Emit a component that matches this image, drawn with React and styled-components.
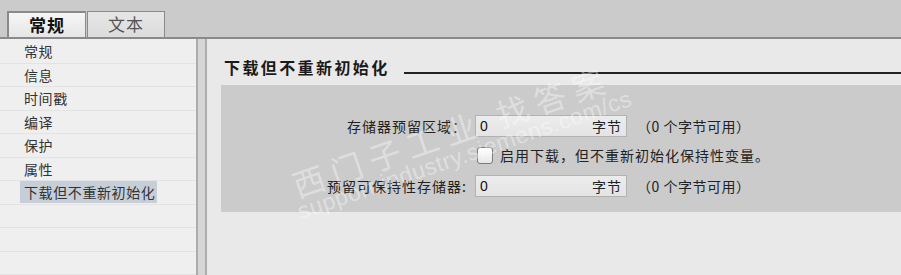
import React from "react";
import styled, { createGlobalStyle } from "styled-components";

const Global = createGlobalStyle`
  html, body { margin: 0; padding: 0; }
  body {
    width: 901px; height: 275px; overflow: hidden;
    background: #cbcbcb;
    font-family: "Noto Sans CJK SC", "Liberation Sans", sans-serif;
    color: #222;
  }
`;

const Page = styled.div`
  position: relative;
  width: 901px;
  height: 275px;
  display: flex;
  flex-direction: column;
  overflow: hidden;
`;

const TabStrip = styled.div`
  box-sizing: border-box;
  padding: 11px 0 0 7px;
  display: flex;
  align-items: stretch;
  gap: 1px;
  background: #cbcbcb;
  border-bottom: 2px solid #8a8a8a;
  height: 39px;
`;

const Tab = styled.div`
  width: ${(p) => (p.$active ? 79 : 78)}px;
  box-sizing: border-box;
  border: 1px solid #8a8a8a;
  border-bottom: none;
  border-width: ${(p) => (p.$active ? "2px 1px 0 2px" : "1px 1px 0 1px")};
  background: ${(p) =>
    p.$active ? "linear-gradient(#f6f6f6, #e6e6e6)" : "linear-gradient(#e6e6e6, #dcdcdc)"};
  font-size: 17px;
  font-weight: ${(p) => (p.$active ? 700 : 400)};
  color: ${(p) => (p.$active ? "#111" : "#555")};
  letter-spacing: 1px;
  display: flex;
  align-items: center;
  justify-content: center;
  line-height: 1;
  padding-bottom: 2px;
`;

const Body = styled.div`
  flex: 1;
  display: flex;
  min-height: 0;
`;

const Nav = styled.div`
  width: 196px;
  background: #efefef;
  display: flex;
  flex-direction: column;
  padding-top: 1px;
`;

const NavRow = styled.div`
  height: 23.5px;
  box-sizing: border-box;
  border-bottom: 1px solid #e3e3e3;
  display: flex;
  align-items: center;
  padding-left: 20px;
  flex-shrink: 0;
`;

const NavLabel = styled.span`
  font-size: 14px;
  letter-spacing: 0.6px;
  color: #333;
  line-height: 22px;
  padding: 0 2px 0 4px;
  background: ${(p) => (p.$selected ? "#c6ced8" : "transparent")};
`;

const Splitter = styled.div`
  width: 7px;
  background: #d6d6d6;
  border-left: 2px solid #acacac;
  border-right: 2px solid #acacac;
`;

const Content = styled.div`
  flex: 1;
  background: #e9e9e9;
  display: flex;
  flex-direction: column;
  padding-top: 16px;
`;

const TitleRow = styled.div`
  height: 24px;
  display: flex;
  align-items: center;
  padding-left: 17px;
`;

const Title = styled.div`
  font-size: 16px;
  font-weight: 700;
  letter-spacing: 2.4px;
  color: #1a1a1a;
  line-height: 24px;
`;

const TitleLine = styled.div`
  flex: 1;
  margin-left: 14px;
  margin-top: 12px;
  border-top: 2px solid #222;
`;

const Section = styled.div`
  margin: 6px 0 0 14px;
  height: 127px;
  box-sizing: border-box;
  background: #cbcbcb;
  padding-top: 30px;
  display: grid;
  grid-template-columns: 246px 152px auto;
  grid-template-rows: 22px 38px 22px;
  column-gap: 8px;
  align-items: center;
`;

const Label = styled.div`
  justify-self: end;
  font-size: 14px;
  letter-spacing: 1px;
  color: #222;
  white-space: nowrap;
`;

const Field = styled.div`
  height: 22px;
  box-sizing: border-box;
  border: 1px solid #b2b2b2;
  background: linear-gradient(#ececec, #e4e4e4);
  display: flex;
  align-items: center;
  justify-content: space-between;
  padding: 0 4px 0 4px;
`;

const Value = styled.span`
  font-family: "Liberation Sans", Arial, sans-serif;
  font-size: 14px;
  color: #111;
`;

const Unit = styled.span`
  font-size: 14px;
  letter-spacing: 1px;
  color: #222;
`;

const Info = styled.div`
  margin-left: 2px;
  font-size: 14px;
  letter-spacing: 0.5px;
  color: #222;
  white-space: nowrap;
`;

const CheckRow = styled.label`
  grid-column: 2 / span 2;
  align-self: start;
  margin-top: 8px;
  display: flex;
  align-items: center;
  gap: 7px;
  font-size: 14px;
  letter-spacing: 1px;
  color: #222;
  white-space: nowrap;
  margin-left: 2px;
`;

const Box = styled.span`
  width: 16px;
  height: 17px;
  box-sizing: border-box;
  border: 1px solid #7c7c7c;
  border-radius: 3px;
  background: linear-gradient(#ffffff, #e6e6e6);
`;

const Watermark = styled.div`
  position: absolute;
  left: 288px;
  top: 170px;
  transform: rotate(-19deg);
  transform-origin: left top;
  pointer-events: none;
  color: rgba(255, 255, 255, 0.4);
  display: flex;
  flex-direction: column;
  line-height: 1;
`;

const WmCn = styled.div`
  font-size: 32px;
  letter-spacing: 8px;
  white-space: nowrap;
`;

const WmUrl = styled.div`
  font-family: "Liberation Sans", Arial, sans-serif;
  font-size: 23px;
  letter-spacing: 0.6px;
  white-space: nowrap;
  margin: 0 0 0 -4px;
`;

const navItems = ["常规", "信息", "时间戳", "编译", "保护", "属性", "下载但不重新初始化", "", "", ""];

export default function App() {
  return (
    <Page>
      <Global />
      <TabStrip>
        <Tab $active>常规</Tab>
        <Tab>文本</Tab>
      </TabStrip>
      <Body>
        <Nav>
          {navItems.map((t, i) => (
            <NavRow key={i}>
              {t && <NavLabel $selected={i === 6}>{t}</NavLabel>}
            </NavRow>
          ))}
        </Nav>
        <Splitter />
        <Content>
          <TitleRow>
            <Title>下载但不重新初始化</Title>
            <TitleLine />
          </TitleRow>
          <Section>
            <Label>存储器预留区域：</Label>
            <Field>
              <Value>0</Value>
              <Unit>字节</Unit>
            </Field>
            <Info>（0 个字节可用）</Info>
            <CheckRow>
              <Box />
              启用下载，但不重新初始化保持性变量。
            </CheckRow>
            <Label>预留可保持性存储器:</Label>
            <Field>
              <Value>0</Value>
              <Unit>字节</Unit>
            </Field>
            <Info>（0 个字节可用）</Info>
          </Section>
        </Content>
      </Body>
      <Watermark>
        <WmCn>西门子工业 找答案</WmCn>
        <WmUrl>support.industry.siemens.com/cs</WmUrl>
      </Watermark>
    </Page>
  );
}
